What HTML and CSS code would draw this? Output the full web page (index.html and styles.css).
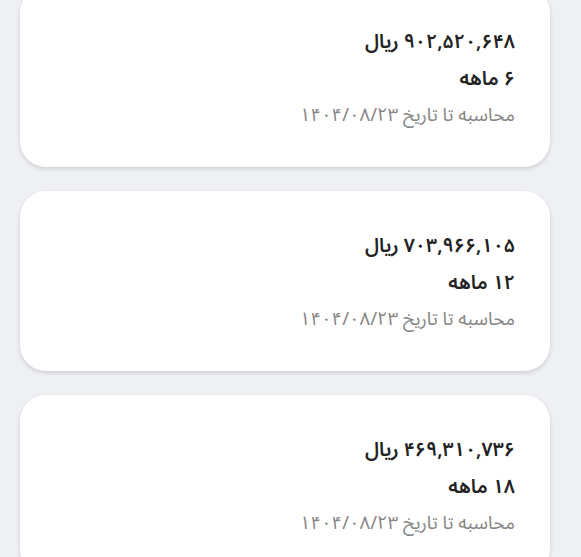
FILE: index.html
```html
<!DOCTYPE html>
<html lang="fa" dir="rtl">
<head>
<meta charset="utf-8">
<link rel="stylesheet" href="styles.css">
</head>
<body>
<div class="list">
  <div class="card">
    <div class="amount">۹۰۲,۵۲۰,۶۴۸ ریال</div>
    <div class="months">۶ ماهه</div>
    <div class="date">محاسبه تا تاریخ ۱۴۰۴/۰۸/۲۳</div>
  </div>
  <div class="card">
    <div class="amount">۷۰۳,۹۶۶,۱۰۵ ریال</div>
    <div class="months">۱۲ ماهه</div>
    <div class="date">محاسبه تا تاریخ ۱۴۰۴/۰۸/۲۳</div>
  </div>
  <div class="card">
    <div class="amount">۴۶۹,۳۱۰,۷۳۶ ریال</div>
    <div class="months">۱۸ ماهه</div>
    <div class="date">محاسبه تا تاریخ ۱۴۰۴/۰۸/۲۳</div>
  </div>
</div>
</body>
</html>
```
FILE: styles.css
```css
html, body {
  margin: 0;
  padding: 0;
  background: #eef0f4;
  overflow: hidden;
}
body {
  font-family: "Noto Sans Arabic", "Vazirmatn", "DejaVu Sans", sans-serif;
}
.list {
  display: flex;
  flex-direction: column;
  gap: 24px;
  margin-top: -13px;
  padding: 0 31px 0 20px;
}
.card {
  height: 180px;
  box-sizing: border-box;
  background: #ffffff;
  border-radius: 26px;
  box-shadow: 0 2px 4px rgba(0, 0, 0, 0.14);
  display: flex;
  flex-direction: column;
  justify-content: center;
  align-items: flex-start;
  gap: 13px;
  padding: 3px 35px 0 20px;
}
.amount {
  font-size: 19.5px;
  font-weight: 600;
  color: #222222;
  line-height: 24px;
}
.months {
  font-size: 19.5px;
  font-weight: 600;
  color: #222222;
  line-height: 24px;
}
.date {
  font-size: 18.5px;
  color: #858585;
  line-height: 24px;
}
```
